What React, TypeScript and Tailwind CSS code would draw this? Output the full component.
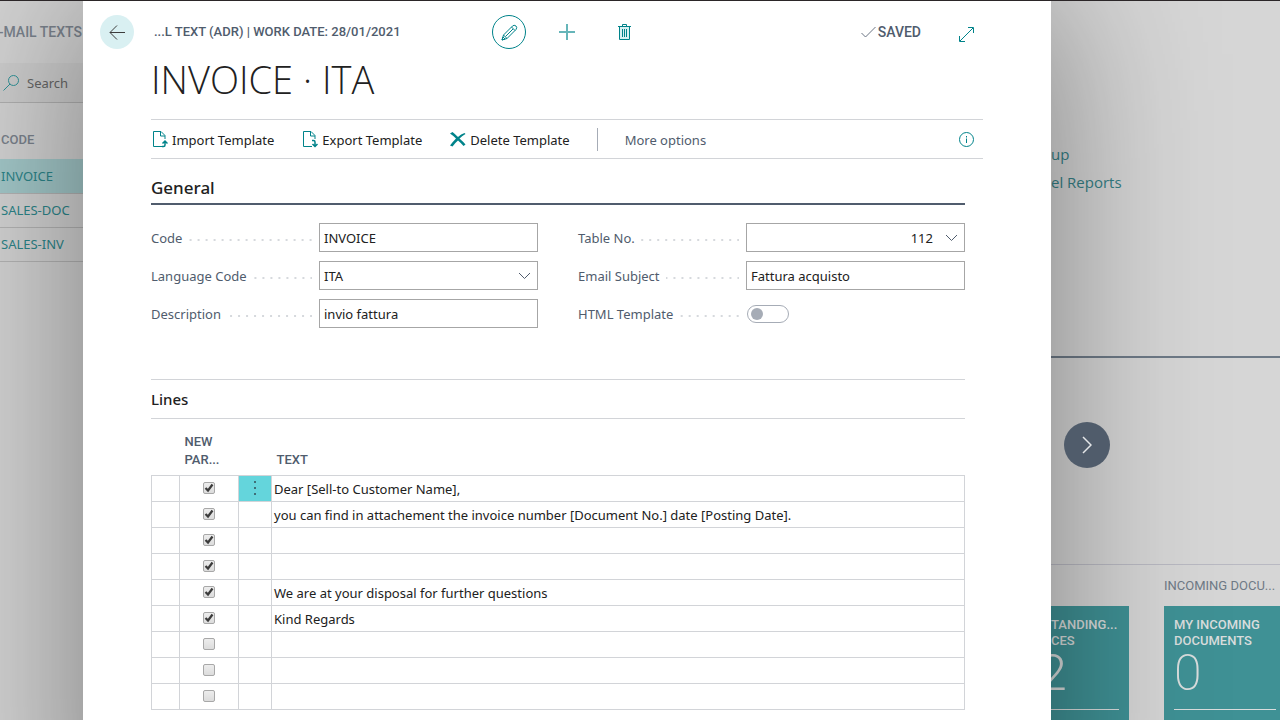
import React, { useState } from 'react'

type Line = {
  id: number;
  newPar: boolean;
  text: string;
}

const initialLines: Line[] = [
  { id: 1, newPar: true, text: "Dear [Sell-to Customer Name]," },
  { id: 2, newPar: true, text: "you can find in attachement the invoice number [Document No.] date [Posting Date]." },
  { id: 3, newPar: true, text: "" },
  { id: 4, newPar: true, text: "" },
  { id: 5, newPar: true, text: "We are at your disposal for further questions" },
  { id: 6, newPar: true, text: "Kind Regards" },
  { id: 7, newPar: false, text: "" },
  { id: 8, newPar: false, text: "" },
  { id: 9, newPar: false, text: "" },
];

const codes = ["INVOICE", "SALES-DOC", "SALES-INV"];

const inputClass = "w-full h-[29px] border border-[#a6a6a6] bg-white px-1 text-[#212121] appearance-none rounded-none outline-none";

function Chevron() {
  return (
    <svg className="absolute right-[7px] top-[11px] pointer-events-none" width="13" height="8" viewBox="0 0 13 8" fill="none" stroke="#505c6d">
      <path d="M1 1l5.500 5.500L12 1" />
    </svg>
  )
}

function TemplateIcon({ direction }: { direction: "up" | "down" }) {
  return (
    <svg width="15" height="17" viewBox="0 0 15 17" fill="none" stroke="#00838a">
      <path d="M9 15.500H.5V.5h7.500l4 4V8" />
      <path d="M7.500.5v4.500H12" />
      {direction === "up"
        ? <path d="M9 15.500h1.500q1.500 0 1.500-1.500v-3M9.500 12.500L12 10l2.500 2.500" strokeWidth="1.500" />
        : <path d="M9 9.500h1.500q1.500 0 1.500 1.500v4M9.500 13L12 15.500 14.500 13" strokeWidth="1.500" />}
    </svg>
  )
}

function Field({ id, label, children }: { id: string; label: string; children: React.ReactNode }) {
  return (
    <div className="grid grid-cols-[168px_minmax(0,1fr)] items-center h-[29px]">
      <div className="flex items-center pr-[7px]">
        <label htmlFor={id} className="text-[#505c6d] pr-[6px] whitespace-nowrap">{label}</label>
        <span className="flex-1 h-[2px] mt-1 bg-[linear-gradient(to_left,#d6d9dd_2px,transparent_2px)] bg-[length:8px_2px] bg-right" />
      </div>
      {children}
    </div>
  )
}

function ListPane() {
  return (
    <aside className="overflow-hidden bg-[#d3d3d3] whitespace-nowrap">
      <h2 className="h-[62px] flex items-center justify-end pr-px font-[Roboto] text-sm font-medium text-[#7a828c]">-MAIL TEXTS</h2>
      <label className="flex items-center h-10 pl-[3px] gap-2 bg-[#cdcdcd] border-b border-[#b0b0b0]">
        <svg className="shrink-0" width="16" height="16" viewBox="0 0 16 16" fill="none" stroke="#2f9297">
          <circle cx="10.500" cy="5.500" r="5" />
          <path d="M7 9L.5 15.500" />
        </svg>
        <input type="text" placeholder="Search" className="w-12 bg-transparent outline-none placeholder:text-[#666666]" />
      </label>
      <table className="w-full border-collapse text-left">
        <thead>
          <tr>
            <th className="h-14 pl-px pt-[18px] align-middle font-[Roboto] text-[13px] font-medium text-[#7a828c]">CODE</th>
          </tr>
        </thead>
        <tbody>
          {codes.map((code, i) => (
            <tr key={code} className={i === 0 ? "h-[34px] bg-[#a3c8c9] border-b border-[#b4b4b4]" : "h-[34px] border-b border-[#b4b4b4]"}>
              <td className="pl-px"><a href="#" className="text-[#2c8589]">{code}</a></td>
            </tr>
          ))}
        </tbody>
      </table>
    </aside>
  )
}

function RolePane() {
  return (
    <aside className="flex flex-col overflow-hidden bg-[#d6d6d6] whitespace-nowrap">
      <nav className="flex flex-col h-[355px] pt-[139px] text-[15px] leading-7 text-[#358086] font-['Open_Sans']">
        <a href="#">up</a>
        <a href="#">el Reports</a>
      </nav>
      <div className="h-[209px] border-t-2 border-b border-t-[#6e7a87] border-b-[#b9b9c2] pt-16 pl-[13px]">
        <button aria-label="Next" className="relative z-20 w-[46px] h-[46px] rounded-full bg-[#505c6b] flex items-center justify-center">
          <svg width="10" height="18" viewBox="0 0 10 18" fill="none" stroke="#e4e6e8" strokeWidth="1.500">
            <path d="M1 1l8 8-8 8" />
          </svg>
        </button>
      </div>
      <div className="flex-1 grid grid-cols-[78px_minmax(0,1fr)] grid-rows-[41px_1fr] gap-x-[35px] font-[Roboto] text-[13px] leading-4">
        <span className="col-start-2 self-center pt-px text-[#6f7a86]">INCOMING DOCU...</span>
        <a href="#" className="row-start-2 bg-[#3f9195] text-[#d9dddd] pt-[11px] pr-[10px]">
          <div className="font-medium">TANDING...<br />CES</div>
          <div className="text-[50px] leading-[48px] pb-3 font-light -ml-3">2</div>
          <div className="border-t border-[#d9dddd]" />
        </a>
        <a href="#" className="row-start-2 bg-[#3f9195] text-[#d9dddd] pt-[11px] pl-[10px] pr-1">
          <div className="font-medium">MY INCOMING<br />DOCUMENTS</div>
          <div className="text-[50px] leading-[48px] pb-3 font-extralight">0</div>
          <div className="border-t border-[#d9dddd]" />
        </a>
      </div>
    </aside>
  )
}

export default function App() {
  const [lines, setLines] = useState<Line[]>(initialLines);
  const [html, setHtml] = useState<boolean>(false);

  function toggleLine(id: number) {
    setLines(lines.map(line => line.id === id ? { ...line, newPar: !line.newPar } : line));
  }

  return (
    <div className="grid grid-cols-[83px_minmax(0,1fr)_229px] h-screen overflow-hidden border-t border-[#2b2628] font-['Noto_Sans',sans-serif] text-[13px] leading-5 text-[#212121]">
      <ListPane />

      <main className="relative z-10 bg-white pb-40 shadow-[0_0_150px_rgba(0,0,0,0.42)]">
        <header className="grid grid-cols-[1fr_auto_1fr] items-center pt-[14px] pl-[17px] pr-[17px] font-[Roboto] text-sm font-medium text-[#505c6d]">
          <div className="flex items-center gap-5 whitespace-nowrap">
            <button aria-label="Back" className="w-[34px] h-[34px] rounded-full bg-[#d9f0f2] flex items-center justify-center">
              <svg width="16" height="15" viewBox="0 0 16 15" fill="none" stroke="#3c3c3c">
                <path d="M16 7.500H1M8 .5l-7 7 7 7" />
              </svg>
            </button>
            <span className="pt-px text-[13px]">...L TEXT (ADR) | WORK DATE: 28/01/2021</span>
          </div>
          <div className="flex gap-6">
            <button aria-label="Edit" className="w-[34px] h-[34px] rounded-full border border-[#00838a] flex items-center justify-center">
              <svg width="17" height="17" viewBox="0 0 17 17" fill="none" stroke="#00838a">
                <path d="M1 16l1.500-5L11.500 2q1.500-1.500 3.500 0 1.500 1.500 0 3.500L6 14.500zM2.500 11L6 14.500M10.500 3l3.500 3.500M4.500 12.500l7.500-7.500M1 16l1-3 2 2z" />
              </svg>
            </button>
            <button aria-label="New" className="w-[34px] h-[34px] flex items-center justify-center">
              <svg width="16" height="16" viewBox="0 0 16 16" stroke="#66b5b9" strokeWidth="2">
                <path d="M8 0v16M0 8h16" />
              </svg>
            </button>
            <button aria-label="Delete" className="w-[34px] h-[34px] flex items-center justify-center">
              <svg width="14" height="16" viewBox="0 0 14 16" fill="none" stroke="#00838a">
                <path d="M2 3h9v12H2z" fill="#d9f0f2" stroke="none" />
                <path d="M0 2.500h13M4.500 2.500v-2h4v2M1.500 2.500v13h10v-13M4.500 5v8M6.500 5v8M8.500 5v8" />
              </svg>
            </button>
          </div>
          <div className="flex items-center justify-end pr-[60px]">
            <svg width="15" height="12" viewBox="0 0 15 12" fill="none" stroke="#6b7583">
              <path d="M.5 7l4 4L14.500 1" />
            </svg>
            <span className="ml-[2px] mr-[38px]">SAVED</span>
            <button aria-label="Expand" className="pt-1">
              <svg width="15" height="15" viewBox="0 0 15 15" fill="none" stroke="#00838a">
                <path d="M1 14L14 1M9 .5h5.500V6M.5 9v5.500H6" />
              </svg>
            </button>
          </div>
        </header>

        <div className="px-[68px]">
          <h1 className="text-[38px] leading-[48px] font-light pt-[6px] pb-4 font-['Open_Sans']">INVOICE · ITA</h1>

          <div className="flex items-center h-10 border-y border-[#d2d4d8] pl-[2px] pr-[9px] whitespace-nowrap">
            <button className="flex items-center gap-1"><TemplateIcon direction="up" /><span className="pt-px">Import Template</span></button>
            <button className="flex items-center gap-1 ml-[29px]"><TemplateIcon direction="down" /><span className="pt-px">Export Template</span></button>
            <button className="flex items-center gap-1 ml-[28px]">
              <svg width="16" height="15" viewBox="0 0 16 15" fill="#00838a">
                <path d="M0 1.500L2.500 0Q5 2 8 5 11 2 14.500 1l1 1Q12 4 9.500 6.500 13 9.500 15.500 12.500L13.500 14Q11 11 8 8.500 5 11 2.500 14.500L0 13.500Q3 9.500 6 6.500 3 3.500 0 1.500z" />
              </svg>
              <span className="pt-px">Delete Template</span>
            </button>
            <span className="w-px h-[23px] ml-[27px] bg-[#a6acb6]" />
            <button className="ml-[27px] pt-px text-[#505c6d]">More options</button>
            <button aria-label="Details" className="ml-auto">
              <svg width="15" height="15" viewBox="0 0 15 15" fill="none" stroke="#00838a">
                <circle cx="7.500" cy="7.500" r="7" />
                <path d="M7.500 6.500V11M7.500 4v1.500" />
              </svg>
            </button>
          </div>

          <div className="pr-[18px]">
            <h2 className="flex items-end h-[46px] pb-[3px] border-b-2 border-[#505c6d] text-[17px] leading-6 font-medium">General</h2>

            <form className="grid grid-cols-2 gap-x-10 pt-[18px]">
              <div className="flex flex-col gap-[9px]">
                <Field id="code" label="Code">
                  <input id="code" type="text" defaultValue="INVOICE" className={inputClass} />
                </Field>
                <Field id="language" label="Language Code">
                  <div className="relative">
                    <select id="language" className={inputClass}>
                      <option>ITA</option>
                    </select>
                    <Chevron />
                  </div>
                </Field>
                <Field id="description" label="Description">
                  <input id="description" type="text" defaultValue="invio fattura" className={inputClass} />
                </Field>
              </div>
              <div className="flex flex-col gap-[9px]">
                <Field id="table" label="Table No.">
                  <div className="relative">
                    <select id="table" className={`${inputClass} pr-[31px] [text-align-last:right]`}>
                      <option>112</option>
                    </select>
                    <Chevron />
                  </div>
                </Field>
                <Field id="subject" label="Email Subject">
                  <input id="subject" type="text" defaultValue="Fattura acquisto" className={inputClass} />
                </Field>
                <Field id="html" label="HTML Template">
                  <input
                    id="html"
                    type="checkbox"
                    role="switch"
                    checked={html}
                    onChange={() => setHtml(!html)}
                    className="appearance-none flex items-center w-[42px] h-[18px] ml-px px-[3px] rounded-full border border-[#a6acb6] before:w-3 before:h-3 before:rounded-full before:bg-[#a6acb6] checked:justify-end"
                  />
                </Field>
              </div>
            </form>

            <h2 className="flex items-center h-10 mt-[51px] border-y border-[#d2d4d8] text-[15px] font-medium">Lines</h2>

            <table className="w-full table-fixed border-collapse">
              <colgroup>
                <col className="w-[28px]" />
                <col className="w-[59px]" />
                <col className="w-[33px]" />
                <col />
              </colgroup>
              <thead className="font-[Roboto] text-[13px] leading-[18px] text-[#505c6d]">
                <tr className="h-14 text-left align-bottom">
                  <td />
                  <th className="pl-[5px] pb-[6px] font-medium">NEW<br />PAR...</th>
                  <td />
                  <th className="pl-[5px] pb-[6px] font-medium">TEXT</th>
                </tr>
              </thead>
              <tbody>
                {lines.map((line, i) => (
                  <tr key={line.id} className="h-[26px]">
                    <td className="border border-[#d2d4d8]" />
                    <td className="border border-[#d2d4d8]">
                      <div className="grid w-3 mx-auto">
                        <input
                          type="checkbox"
                          aria-label="New paragraph"
                          checked={line.newPar}
                          onChange={() => toggleLine(line.id)}
                          className="appearance-none col-start-1 row-start-1 w-3 h-3 rounded-[2px] border border-[#a8a8a8] bg-linear-to-b from-[#ededed] to-[#dcdcdc]"
                        />
                        {line.newPar && (
                          <svg className="col-start-1 row-start-1 pointer-events-none" width="12" height="12" viewBox="0 0 12 12" fill="none" stroke="#3b3b3b" strokeWidth="2.200">
                            <path d="M2.500 6l2.500 2.500L9.500 2.500" />
                          </svg>
                        )}
                      </div>
                    </td>
                    <td className={i === 0 ? "border border-[#d2d4d8] bg-[#64d5dc] p-0" : "border border-[#d2d4d8] p-0"}>
                      {i === 0 && (
                        <button aria-label="Show more options" className="w-full flex justify-center">
                          <svg width="2" height="14" viewBox="0 0 2 14" fill="#3f6f78">
                            <path d="M0 0h2v2H0zM0 6h2v2H0zM0 12h2v2H0z" />
                          </svg>
                        </button>
                      )}
                    </td>
                    <td className="border border-[#d2d4d8] px-[2px] pt-[2px] pb-0 whitespace-nowrap">{line.text}</td>
                  </tr>
                ))}
              </tbody>
            </table>
          </div>
        </div>
      </main>

      <RolePane />
    </div>
  )
}
